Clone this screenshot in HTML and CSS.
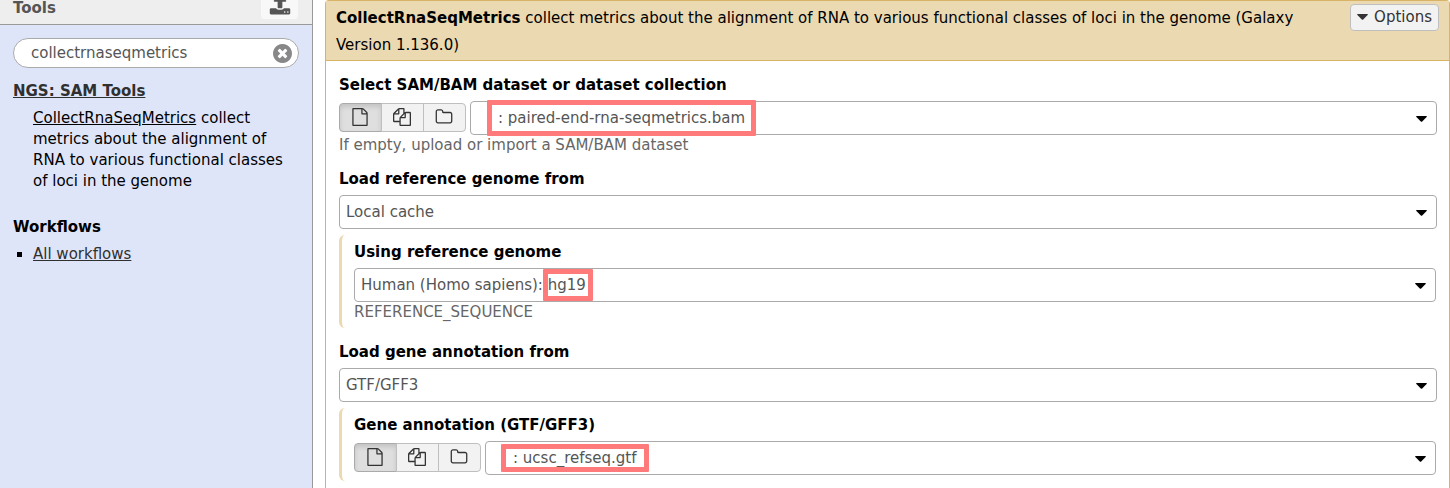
FILE: index.html
```html
<!DOCTYPE html>
<html lang="en">
<head>
<meta charset="utf-8">
<title>Galaxy</title>
<link rel="stylesheet" href="styles.css">
</head>
<body>
<svg class="sprite" aria-hidden="true">
  <symbol id="file" viewBox="0 0 1792 1792"><path d="M1596 380q28 28 48 76t20 88v1152q0 40-28 68t-68 28h-1344q-40 0-68-28t-28-68v-1600q0-40 28-68t68-28h896q40 0 88 20t76 48zm-444-244v376h376q-10-29-22-41l-313-313q-12-12-41-22zm384 1528v-1024h-416q-40 0-68-28t-28-68v-416h-768v1536h1280z"/></symbol>
  <symbol id="files" viewBox="0 0 1792 1792"><path d="M1696 384q40 0 68 28t28 68v1216q0 40-28 68t-68 28h-960q-40 0-68-28t-28-68v-288h-544q-40 0-68-28t-28-68v-672q0-40 20-88t48-76l408-408q28-28 76-48t88-20h416q40 0 68 28t28 68v328q68-40 128-40h416zm-544 213l-299 299h299v-299zm-640-384l-299 299h299v-299zm196 647l316-316v-416h-384v416q0 40-28 68t-68 28h-416v640h512v-256q0-40 20-88t48-76zm956 804v-1152h-384v416q0 40-28 68t-68 28h-416v640h896z"/></symbol>
  <symbol id="folder" viewBox="0 0 1792 1792"><path d="M1600 1312v-704q0-40-28-68t-68-28h-704q-40 0-68-28t-28-68v-64q0-40-28-68t-68-28h-320q-40 0-68 28t-28 68v960q0 40 28 68t68 28h1216q40 0 68-28t28-68zm128-704v704q0 92-66 158t-158 66h-1216q-92 0-158-66t-66-158v-960q0-92 66-158t158-66h320q92 0 158 66t66 158v32h672q92 0 158 66t66 158z"/></symbol>
  <symbol id="clear" viewBox="128 128 1536 1536"><path d="M1277 1122q0-26-19-45l-181-181 181-181q19-19 19-45 0-27-19-46l-90-90q-19-19-46-19-26 0-45 19l-181 181-181-181q-19-19-45-19-27 0-46 19l-90 90q-19 19-19 46 0 26 19 45l181 181-181 181q-19 19-19 45 0 27 19 46l90 90q19 19 46 19 26 0 45-19l181-181 181 181q19 19 45 19 27 0 46-19l90-90q19-19 19-46zm387-226q0 209-103 385.500t-279.500 279.500-385.500 103-385.500-103-279.500-279.500-103-385.500 103-385.500 279.500-279.500 385.500-103 385.500 103 279.500 279.500 103 385.500z"/></symbol>
  <symbol id="upload" viewBox="0 0 1792 1792"><path d="M1344 1472q0-26-19-45t-45-19-45 19-19 45 19 45 45 19 45-19 19-45zm256 0q0-26-19-45t-45-19-45 19-19 45 19 45 45 19 45-19 19-45zm128-224v320q0 40-28 68t-68 28h-1472q-40 0-68-28t-28-68v-320q0-40 28-68t68-28h427q21 56 70.500 92t110.500 36h256q61 0 110.500-36t70.500-92h427q40 0 68 28t28 68zm-325-648q-17 40-59 40h-256v448q0 26-19 45t-45 19h-256q-26 0-45-19t-19-45v-448h-256q-42 0-59-40-17-39 14-69l448-448q18-19 45-19t45 19l448 448q31 30 14 69z"/></symbol>
  <symbol id="caret" viewBox="0 0 11 6"><path d="M.6 0h9.800q.8.200.2.900L6.200 5.500q-.7.700-1.400 0L.4.900Q-.2.200.6 0z"/></symbol>
</svg>
<div class="layout">
  <aside class="sidebar">
    <div class="panel-head">
      <h2 class="panel-title">Tools</h2>
      <button class="upload" type="button" aria-label="Upload data"><svg class="upload-icon"><use href="#upload"/></svg></button>
    </div>
    <div class="panel-body">
      <div class="search">
        <input class="search-input" type="text" aria-label="Search tools" value="collectrnaseqmetrics">
        <button class="search-clear" type="button" aria-label="Clear search"><svg class="clear-icon"><use href="#clear"/></svg></button>
      </div>
      <h3 class="section-title"><a href="#sam">NGS: SAM Tools</a></h3>
      <p class="tool"><a class="tool-link" href="#tool">CollectRnaSeqMetrics</a> collect metrics about the alignment of RNA to various functional classes of loci in the genome</p>
      <h3 class="workflows-title">Workflows</h3>
      <ul class="workflows"><li><a href="#workflows">All workflows</a></li></ul>
    </div>
  </aside>
  <main class="card">
    <header class="card-head">
      <h1 class="card-title"><b>CollectRnaSeqMetrics</b> collect metrics about the alignment of RNA to various functional classes of loci in the genome (Galaxy Version 1.136.0)</h1>
      <button class="options" type="button"><svg class="caret"><use href="#caret"/></svg>Options</button>
    </header>
    <form class="form">
      <div class="field">
        <label class="label" for="bam">Select SAM/BAM dataset or dataset collection</label>
        <div class="row">
          <div class="group">
            <button class="kind active" type="button" aria-label="Single dataset"><svg class="icon"><use href="#file"/></svg></button>
            <button class="kind" type="button" aria-label="Multiple datasets"><svg class="icon"><use href="#files"/></svg></button>
            <button class="kind" type="button" aria-label="Dataset collection"><svg class="icon"><use href="#folder"/></svg></button>
          </div>
          <div class="pick">
            <select class="select dataset" id="bam"><option>: paired-end-rna-seqmetrics.bam</option></select>
            <svg class="caret arrow"><use href="#caret"/></svg>
            <span class="mark mark-bam"></span>
          </div>
        </div>
        <p class="help">If empty, upload or import a SAM/BAM dataset</p>
      </div>
      <div class="field">
        <label class="label" for="source">Load reference genome from</label>
        <div class="pick">
          <select class="select" id="source"><option>Local cache</option></select>
          <svg class="caret arrow"><use href="#caret"/></svg>
        </div>
        <div class="nested">
          <label class="label" for="genome">Using reference genome</label>
          <div class="pick">
            <select class="select" id="genome"><option>Human (Homo sapiens): hg19</option></select>
            <svg class="caret arrow"><use href="#caret"/></svg>
            <span class="mark mark-genome"></span>
          </div>
          <p class="help">REFERENCE_SEQUENCE</p>
        </div>
      </div>
      <div class="field">
        <label class="label" for="annotation">Load gene annotation from</label>
        <div class="pick">
          <select class="select" id="annotation"><option>GTF/GFF3</option></select>
          <svg class="caret arrow"><use href="#caret"/></svg>
        </div>
        <div class="nested">
          <label class="label" for="gtf">Gene annotation (GTF/GFF3)</label>
          <div class="row">
            <div class="group">
              <button class="kind active" type="button" aria-label="Single dataset"><svg class="icon"><use href="#file"/></svg></button>
              <button class="kind" type="button" aria-label="Multiple datasets"><svg class="icon"><use href="#files"/></svg></button>
              <button class="kind" type="button" aria-label="Dataset collection"><svg class="icon"><use href="#folder"/></svg></button>
            </div>
            <div class="pick">
              <select class="select dataset" id="gtf"><option>: ucsc_refseq.gtf</option></select>
              <svg class="caret arrow"><use href="#caret"/></svg>
              <span class="mark mark-gtf"></span>
            </div>
          </div>
        </div>
      </div>
    </form>
  </main>
</div>
</body>
</html>
```
FILE: styles.css
```css
* { box-sizing: border-box; }
body, h1, h2, h3, p, ul { margin: 0; padding: 0; }
body, button, input, select {
  font-family: "DejaVu Sans", Verdana, sans-serif;
  font-size: 15px;
}
body { line-height: 21px; color: #000; background: #fff; }
h1, h2, h3 { font-size: 15px; }
svg { display: block; fill: currentColor; }
.sprite { display: none; }
.layout { display: flex; gap: 12px; min-height: 100vh; }

.sidebar { width: 313px; flex: none; background: #dfe5f9; border-right: 1px solid #999; }
.panel-head {
  display: flex; align-items: flex-end; justify-content: space-between;
  height: 25px; padding: 0 14px 5px 13px; overflow: hidden;
  background: #eee; border-bottom: 1px solid #999;
}
.panel-title { color: #555; }
.upload {
  display: flex; justify-content: center; align-items: flex-end; flex: none;
  width: 37px; height: 32px; padding: 0 0 3px; border: 0; border-radius: 3px;
  background: #f8f8f8; color: #555;
}
.upload-icon { width: 22px; height: 22px; }
.panel-body { padding: 13px; }
.search { position: relative; }
.search-input {
  display: block; width: 100%; height: 30px; padding: 0 40px 0 17px;
  border: 1px solid #aaa; border-radius: 15px; background: #fff; color: #555;
}
.search-clear {
  position: absolute; right: 7px; top: 6px; padding: 0; border: 0;
  background: none; color: #888;
}
.clear-icon { width: 19px; height: 19px; }
.section-title { margin-top: 13px; }
.section-title a, .workflows a { color: #303030; }
.tool { margin: 6px 0 0 20px; }
.tool-link { color: #000; }
.workflows-title { margin-top: 25px; }
.workflows { margin-top: 6px; padding-left: 20px; list-style: square; }

.card { flex: 1; min-width: 0; border: 1px solid #d8b365; border-bottom: 0; border-radius: 4px 4px 0 0; }
.card-head {
  display: flex; align-items: flex-start; justify-content: space-between; gap: 32px;
  padding: 3px 10px 2px; background: #ebd9b2; border-bottom: 1px solid #d8b365;
}
.card-title { padding-top: 1px; margin-bottom: -1px; font-weight: normal; line-height: 27px; }
.options {
  display: flex; align-items: center; gap: 6px; flex: none; height: 27px;
  padding: 0 6px 2px; border: 1px solid #bfbfbf; border-radius: 4px;
  background: #f2f2f2; color: #333;
}
.caret { width: 11px; height: 6px; }
.form { display: flex; flex-direction: column; gap: 14px; padding: 14px 12px 7px 13px; }
.label { display: block; margin-bottom: 5px; font-weight: bold; }
.help { height: 20px; line-height: 21px; color: #666; }
.row { display: flex; align-items: flex-start; gap: 4px; }
.group { display: flex; flex: none; margin-top: 2px; }
.kind {
  display: flex; align-items: center; justify-content: center;
  width: 43px; height: 29px; padding: 0 2px 2px 0; border: 1px solid #bfbfbf;
  margin-right: -1px; background: #f2f2f2; color: #333;
}
.kind:first-child { border-radius: 4px 0 0 4px; }
.kind:last-child { border-radius: 0 4px 4px 0; margin-right: 0; }
.kind.active { background: #dfdfdf; border-color: #aaa; box-shadow: inset 0 3px 5px rgba(0, 0, 0, .125); }
.icon { width: 18px; height: 18px; }
.pick { position: relative; flex: 1; min-width: 0; }
.select {
  appearance: none; display: block; width: 100%; height: 34px; padding: 0 30px 0 6px;
  border: 1px solid #aaa; border-radius: 4px; background: #fff; color: #555;
}
.dataset { padding-left: 27px; }
.arrow { position: absolute; right: 10px; top: 15px; pointer-events: none; }
.nested { margin-top: 6px; padding: 7px 1px 6px 12px; border-left: 3px solid #ebd9b2; border-radius: 6px; }

.mark { position: absolute; border: 5px solid #ff7b7b; border-radius: 1px; pointer-events: none; }
.mark-bam { left: 17px; top: -1px; width: 269px; height: 36px; }
.mark-genome { left: 189px; top: 1px; width: 50px; height: 32px; }
.mark-gtf { left: 16px; top: 3px; width: 148px; height: 28px; }
```
